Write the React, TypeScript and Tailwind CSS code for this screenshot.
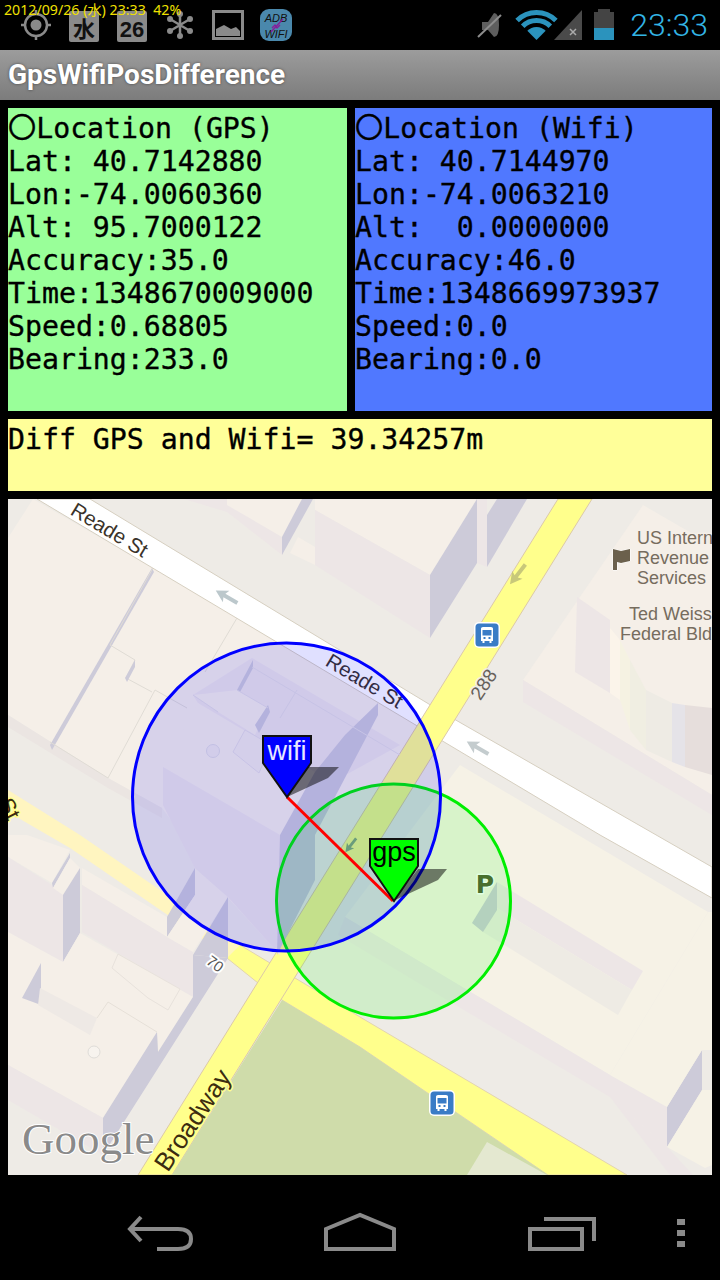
import React from "react";

const MONO = "font-['DejaVu_Sans_Mono','Noto_Sans_CJK_JP',monospace] [-webkit-text-stroke:0.35px_black]";

function P({ pts, fill, stroke }: { pts: string; fill: string; stroke?: string }) {
  return <polygon points={pts} fill={fill} stroke={stroke} strokeWidth={stroke ? 1 : 0} />;
}

function Label({ x, y, r, size, fill, children, halo = "#ffffff", anchor = "middle", font = "Liberation Sans", hw = 3 }: any) {
  return (
    <text
      transform={`translate(${x} ${y}) rotate(${r})`}
      fontSize={size}
      fill={fill}
      textAnchor={anchor}
      fontFamily={font}
      stroke={halo}
      strokeWidth={hw}
      strokeLinejoin="round"
      className="[paint-order:stroke]"
    >
      {children}
    </text>
  );
}

function Bus({ x, y }: { x: number; y: number }) {
  return (
    <g transform={`translate(${x} ${y})`}>
      <rect x="-13" y="-13" width="26" height="26" rx="5" fill="#ffffff" />
      <rect x="-11.5" y="-11.5" width="23" height="23" rx="3.5" fill="#3a7cc6" />
      <path d="M-6 -6.5 Q-6 -8 -4 -8 H4 Q6 -8 6 -6.5 V6 H4.5 V8 H2.5 V6 H-2.500 V8 H-4.5 V6 H-6 Z" fill="#ffffff" />
      <rect x="-4.5" y="-5" width="9" height="5.5" fill="#3a7cc6" />
      <rect x="-3.5" y="2" width="2" height="2" fill="#3a7cc6" />
      <rect x="1.5" y="2" width="2" height="2" fill="#3a7cc6" />
    </g>
  );
}

function Arrow({ x, y, r, fill, s = 1 }: { x: number; y: number; r: number; fill: string; s?: number }) {
  return (
    <g transform={`translate(${x} ${y}) rotate(${r}) scale(${s})`}>
      <path d="M-13 0 L-1 -6.5 L-3 -2 H12 V2 H-3 L-1 6.5 Z" fill={fill} />
    </g>
  );
}

function MapArt() {
  const cream = "#f5efe8";
  const pink = "#ede6e6";
  const shadow = "#cdcbd9";
  const side = "#eeebe6";
  const line = "#e0dcd5";
  return (
    <svg viewBox="8 499 704 676" className="block w-[704px] h-[676px]">
      <rect x="8" y="499" width="704" height="676" fill={side} />

      {/* upper-left block */}
      <P pts="8,538 33,499 153,568 237,618 360,690 440,740 300,920 280,955 228,898 162,808 108,778 8,715" fill={cream} />
      <P pts="8,715 108,778 162,808 162,818 108,788 8,727" fill="#ebe5e2" />
      <P pts="50,745 152,568 154,572 52,750" fill={shadow} />
      <path d="M50 742 L108 778 M110 645 L135 660 L126 678 L152 692 M108 778 L155 690 L187 708 M110 645 L153 568 M237 618 L205 672" stroke={line} fill="none" />
      <P pts="125,678 135,660 135,667 127,682" fill={shadow} />

      {/* top middle buildings */}
      <P pts="184,499 227,499 282,537 282,555 227,512" fill={pink} />
      <P pts="227,499 313,499 282,537 227,505" fill={cream} />
      <P pts="282,537 302,499 313,499 282,555" fill={shadow} />
      <P pts="290,553 298,537 315,547 315,565" fill={cream} />
      <P pts="315,499 477,499 430,575 315,510" fill={cream} />
      <P pts="315,510 430,575 430,638 315,565" fill={pink} />
      <P pts="430,575 477,499 477,563 430,638" fill={shadow} />
      <P pts="477,499 487,499 487,567 477,563" fill={pink} />
      <P pts="487,515 497,499 527,499 487,567" fill={shadow} />

      {/* main roads */}
      <P pts="90,499 37,499 600,835 712,898 712,867 447,715" fill="#ffffff" stroke="#d6cfc0" />
      <P pts="240,945 260,957 360,1017 627,1175 548,1175 360,1047 282,1000 258,983 207,942" fill="#ffff8c" stroke="#e2d4b0" />
      <P pts="8,790 80,835 240,945 225,960 207,942 70,848 8,812" fill="#fff5c0" />
      <P pts="558,499 592,499 172,1175 138,1175" fill="#ffff8c" stroke="#dcc9a8" />

      {/* park */}
      <P pts="282,1000 360,1047 548,1175 172,1175" fill="#cfdcaa" />
      <P pts="487,1142 547,1175 467,1175" fill="#e4e8d0" />

      {/* lower right block */}
      <P pts="460,765 708,912 610,1075 345,917" fill="#f6f2e6" />
      <P pts="345,917 610,1075 610,1097 338,935" fill={pink} />
      <P pts="610,1075 667,1107 667,1147 610,1097" fill={pink} />
      <P pts="610,1097 667,1147 693,1175 670,1175" fill={pink} />
      <P pts="667,1107 702,1050 702,1090 667,1147" fill={shadow} />
      <P pts="708,912 712,912 712,1050 702,1050 667,1107 610,1075" fill="#f6f2e6" />
      <P pts="667,1147 702,1090 712,1090 712,1165 705,1168" fill="#f6f2e6" />
      <P pts="497,882 643,971 632,990 497,908" fill={pink} />
      <P pts="497,908 632,990 618,1015 483,932" fill="#eeebe4" />
      <P pts="497,882 497,910 483,932 472,923" fill={shadow} />

      {/* upper right block */}
      <P pts="643,505 712,545 712,795 523,680" fill={cream} />
      <P pts="523,680 712,795 712,815 523,702" fill={pink} />
      <P pts="577,597 610,620 610,693 575,672" fill={pink} />
      <P pts="610,628 620,640 620,700 610,693" fill="#fbf4ea" />
      <P pts="620,640 630,660 630,730 620,700" fill="#f5f2e2" />
      <P pts="630,660 646,690 646,750 630,730" fill="#f0eee2" />
      <P pts="646,690 672,703 672,762 646,750" fill="#eeebe4" />
      <P pts="672,703 685,705 685,767 672,762" fill="#e5e3e8" />
      <P pts="685,705 712,708 712,775 685,767" fill="#e6dedc" />

      {/* lower left block */}
      <P pts="8,835 27,835 70,850 52,883 8,857" fill={cream} />
      <P pts="8,857 63,892 63,962 8,932" fill={pink} />
      <P pts="70,853 70,858 53,888 52,883" fill={shadow} />
      <P pts="70,858 80,868 63,895 53,888" fill={cream} />
      <P pts="80,868 80,933 63,962 63,895" fill={shadow} />
      <P pts="82,868 167,917 167,937 82,885" fill={cream} />
      <P pts="82,885 167,937 193,952 193,997 82,932" fill={pink} />
      <P pts="167,917 195,868 195,895 167,937" fill={shadow} />
      <P pts="167,937 195,895 195,868 228,897 193,952" fill={cream} />
      <P pts="8,932 63,962 80,933 193,997 158,1052 157,1032 103,1118 8,1065" fill={cream} />
      <P pts="8,1065 103,1118 103,1155 8,1100" fill={pink} />
      <P pts="103,1118 157,1032 158,1052 193,997 193,955 228,958 103,1155" fill={shadow} />
      <P pts="41,963 41,1005 22,998" fill={shadow} />
      <P pts="40,988 97,1018 90,1035 38,1005" fill="#eee9e5" />
      <P pts="118,954 180,989 168,1010 148,998 112,968" fill={cream} stroke="#e8e2dc" />
      <path d="M97 1018 L108 1002 L157 1032" stroke="#e6e0d8" fill="none" />
      <circle cx="94" cy="1052" r="6" fill="#f7f3ee" stroke="#dfdcd8" />
      <P pts="193,955 228,897 228,958" fill={shadow} />

      {/* building under the wifi circle */}
      <P pts="193,695 252,658 400,745 300,800 198,703" fill={pink} />
      <P pts="163,767 198,703 320,775 280,835" fill={cream} />
      <P pts="193,695 237,690 268,708 255,735 218,712" fill={cream} />
      <P pts="163,767 280,835 280,955 228,897 195,868 163,805" fill={pink} />
      <P pts="280,835 315,772 345,735 378,703 378,715 315,835" fill={shadow} />
      <P pts="280,835 315,835 315,880 277,955" fill={shadow} />
      <P pts="237,690 253,660 253,668 240,692" fill={shadow} />
      <P pts="255,725 268,705 270,712 259,733" fill={shadow} />
      <path d="M193 695 L218 712 M237 690 L268 708 M252 667 L400 755 M297 690 L280 718" stroke="#e2dee2" fill="none" />
      <P pts="245,730 271,745 259,773 233,752" fill="#f2ece8" stroke="#e3dee2" />
      <circle cx="213" cy="751" r="6.5" fill="#efeae8" stroke="#dedbe0" />

      {/* labels and marks */}
      <Label x={106} y={536} r={31} size={20.5} fill="#3a332a">Reade St</Label>
      <Label x={361} y={687} r={31} size={20.5} fill="#3a332a">Reade St</Label>
      <Label x={489} y={688} r={-56} size={19} fill="#66605a" halo="#eeebe6">288</Label>
      <Label x={212} y={968} r={37} size={15} fill="#555" halo="#ffffff" hw={4}>70</Label>
      <Label x={200} y={1125} r={-56} size={26} fill="#3c2c10" halo="#ffff8c">Broadway</Label>
      <Label x={-2} y={803} r={62} size={22} fill="#3c2c10" halo="#ffff8c" anchor="start">St</Label>
      <Label x={637} y={544} r={0} size={18} fill="#766c5e" anchor="start" halo="#f5efe8">US Intern</Label>
      <Label x={637} y={564} r={0} size={18} fill="#766c5e" anchor="start" halo="#f5efe8">Revenue</Label>
      <Label x={637} y={584} r={0} size={18} fill="#766c5e" anchor="start" halo="#f5efe8">Services</Label>
      <Label x={629} y={620} r={0} size={18} fill="#766c5e" anchor="start" halo="#f5efe8">Ted Weiss</Label>
      <Label x={620} y={640} r={0} size={18} fill="#766c5e" anchor="start" halo="#f5efe8">Federal Bld</Label>
      <path d="M613 549 L621 551 L630 549 V561 L621 563 L617 562 V570 H613 Z" fill="#6b604c" stroke="#fff" strokeWidth="1" className="[paint-order:stroke]" />
      <Arrow x={227} y={597} r={30} fill="#bcc8cc" />
      <Arrow x={478} y={748} r={30} fill="#c4ccce" />
      <Arrow x={518} y={574} r={-52} fill="#c8c87a" />
      <Arrow x={351} y={845} r={-52} fill="#8aa878" s={0.7} />
      <Bus x={487} y={635} />
      <Bus x={442} y={1103} />
      <Label x={485} y={893} r={0} size={25} fill="#525c34" halo="#ffffff" font="DejaVu Sans">
        <tspan fontWeight="700">P</tspan>
      </Label>
      <text x="22" y="1154" fontSize="45" fontFamily="Liberation Serif" fill="#8a8a8a" stroke="#ffffff" strokeWidth="2" className="[paint-order:stroke]">Google</text>

      {/* overlay */}
      <circle cx="393.500" cy="901" r="117" fill="#00ff00" fillOpacity="0.12" stroke="#00ee00" strokeWidth="3" />
      <circle cx="286.500" cy="797" r="154" fill="#0000ff" fillOpacity="0.12" stroke="#0000ff" strokeWidth="3" />
      <line x1="287" y1="797" x2="393" y2="901" stroke="#ff0000" strokeWidth="3" />
      <polygon points="305,767 339,767 328,778 287,797" fill="#000000" fillOpacity="0.5" />
      <polygon points="263,736 311,736 311,763 287,797 263,763" fill="#0000ff" stroke="#111111" strokeWidth="2" />
      <text x="287" y="760" textAnchor="middle" fontSize="27" fontFamily="Liberation Sans" fill="#e8e8ff">wifi</text>
      <polygon points="418,869 447,869 438,880 393,901" fill="#000000" fillOpacity="0.5" />
      <polygon points="370,839 418,839 418,866 394,901 370,866" fill="#00ff00" stroke="#111111" strokeWidth="2" />
      <text x="394" y="861" textAnchor="middle" fontSize="27" fontFamily="Liberation Sans" fill="#000000">gps</text>
    </svg>
  );
}

function Readout({ lines, className }: { lines: string[]; className: string }) {
  return (
    <div className={`pt-[4px] text-[28.2px] leading-[33px] text-black whitespace-pre ${MONO} ${className}`}>
      {lines.map((l) => (
        <div key={l}>{l}</div>
      ))}
    </div>
  );
}

function StatusBar() {
  const gray = "#8a8a8a";
  return (
    <div className="relative h-[50px] flex items-center bg-black">
      <div className="absolute left-[4px] top-[1px] text-[14.2px] leading-[18px] text-[#f0e000] whitespace-pre font-['Noto_Sans','Noto_Sans_CJK_JP',sans-serif] z-10">2012/09/26 (水) 23:33  42%</div>
      <svg viewBox="0 0 720 50" className="block w-[720px] h-[50px]">
        <g stroke={gray} fill="none">
          <circle cx="36" cy="25" r="11" strokeWidth="2.5" />
          <circle cx="36" cy="25" r="5.5" fill={gray} stroke="none" />
          <path d="M36 10 V14 M36 36 V40 M21 25 H25 M47 25 H51" strokeWidth="2.5" />
        </g>
        <rect x="69" y="11" width="30" height="31" rx="2" fill={gray} />
        <rect x="117" y="11" width="30" height="31" rx="2" fill={gray} />
        <text x="84" y="37" textAnchor="middle" fontSize="22" fontWeight="700" fill="#111" fontFamily="Noto Sans CJK JP">水</text>
        <text x="132" y="37" textAnchor="middle" fontSize="22" fontWeight="700" fill="#111" fontFamily="Liberation Sans">26</text>
        <g stroke={gray} strokeWidth="2.5">
          <path d="M180 13 V37 M170 19 L190 31 M190 19 L170 31" />
        </g>
        <g fill={gray}>
          <circle cx="180" cy="14" r="3" /><circle cx="180" cy="36" r="3" />
          <circle cx="170" cy="19" r="3" /><circle cx="190" cy="19" r="3" />
          <circle cx="170" cy="31" r="3" /><circle cx="190" cy="31" r="3" />
        </g>
        <rect x="213.500" y="11.500" width="29" height="27" fill="none" stroke={gray} strokeWidth="3" />
        <path d="M216 36 V29 L224 25 L231 29 L236 27 L240 31 V36 Z" fill={gray} />
        <rect x="260" y="9" width="32" height="32" rx="9" fill="#4a88ac" />
        <text x="276" y="22" textAnchor="middle" fontSize="11" fill="#111" fontStyle="italic" fontFamily="Liberation Sans">ADB</text>
        <text x="276" y="38" textAnchor="middle" fontSize="11" fill="#111" fontStyle="italic" fontFamily="Liberation Sans">WIFI</text>
        <path d="M272 28 L275 25 L277 28 L280 25 M283 19 L271 32" fill="none" stroke="#8a1a9a" strokeWidth="1.3" />

        <path d="M482 22 H488 L494 13 Q499 13 499 25 Q499 37 494 37 L488 30 H482 Z" fill="#5e5e5e" />
        <path d="M478 37 L501 15" stroke="#8c8c8c" strokeWidth="2" />
        <g fill="none" stroke="#2b93bd" strokeWidth="5">
          <path d="M517.100 20.600 A27.500 27.500 0 0 1 555.900 20.600" />
          <path d="M522.700 26.200 A19.500 19.500 0 0 1 550.300 26.200" />
        </g>
        <path d="M527.300 30.800 A13 13 0 0 1 545.700 30.800 L536.500 40 Z" fill="#2b93bd" />
        <path d="M554 40 L582 10 V40 Z" fill="#4a4a4a" />
        <path d="M570 29 L576 35 M576 29 L570 35" stroke="#aaa" strokeWidth="1.5" />
        <rect x="598" y="9" width="12" height="4" fill="#444" />
        <rect x="594" y="12" width="20" height="16" fill="#444" />
        <rect x="594" y="28" width="20" height="12" fill="#2b93bd" />
      </svg>
      <div className="absolute right-[12px] top-[5px] text-[32px] leading-[40px] font-light text-[#33b5e5] font-['Roboto',sans-serif]">23:33</div>
    </div>
  );
}

function NavBar() {
  const c = "#8a8a8a";
  return (
    <svg viewBox="0 1176 720 104" className="block w-[720px] h-[104px]">
      <g fill="none" stroke={c} strokeWidth="4">
        <path d="M141 1218 L130 1230 L141 1242" />
        <path d="M130 1230 H178 Q191 1230 191 1240 Q191 1250 178 1250 H157" />
        <path d="M326 1250 V1230 L360 1216 L394 1230 V1250 Z" />
        <rect x="530" y="1230" width="52" height="20" />
        <path d="M544 1220 H594 V1242" />
      </g>
      <rect x="677" y="1220" width="8" height="6" fill={c} />
      <rect x="677" y="1231" width="8" height="6" fill={c} />
      <rect x="677" y="1242" width="8" height="6" fill={c} />
    </svg>
  );
}

export default function App() {
  return (
    <div className="w-[720px] h-[1280px] bg-black flex flex-col overflow-hidden">
      <StatusBar />
      <div className="h-[50px] flex items-center pl-[8px] bg-gradient-to-b from-[#9c9c9c] to-[#7c7c7c]">
        <span className="text-[28px] font-bold text-white font-['Roboto',sans-serif] [text-shadow:0_0_3px_rgba(0,0,0,0.5)]">GpsWifiPosDifference</span>
      </div>
      <div className="px-2 pt-2 flex flex-col gap-2">
        <div className="flex gap-2 h-[303px]">
          <Readout
            className="w-[339px] bg-[#99ff99]"
            lines={["〇Location (GPS)", "Lat: 40.7142880", "Lon:-74.0060360", "Alt: 95.7000122", "Accuracy:35.0", "Time:1348670009000", "Speed:0.68805", "Bearing:233.0"]}
          />
          <Readout
            className="w-[357px] bg-[#5078ff]"
            lines={["〇Location (Wifi)", "Lat: 40.7144970", "Lon:-74.0063210", "Alt:  0.0000000", "Accuracy:46.0", "Time:1348669973937", "Speed:0.0", "Bearing:0.0"]}
          />
        </div>
        <div className={`h-[72px] bg-[#ffff99] pt-[4px] text-[28.2px] leading-[33px] text-black whitespace-pre ${MONO}`}>Diff GPS and Wifi= 39.34257m</div>
        <MapArt />
      </div>
      <NavBar />
    </div>
  );
}
